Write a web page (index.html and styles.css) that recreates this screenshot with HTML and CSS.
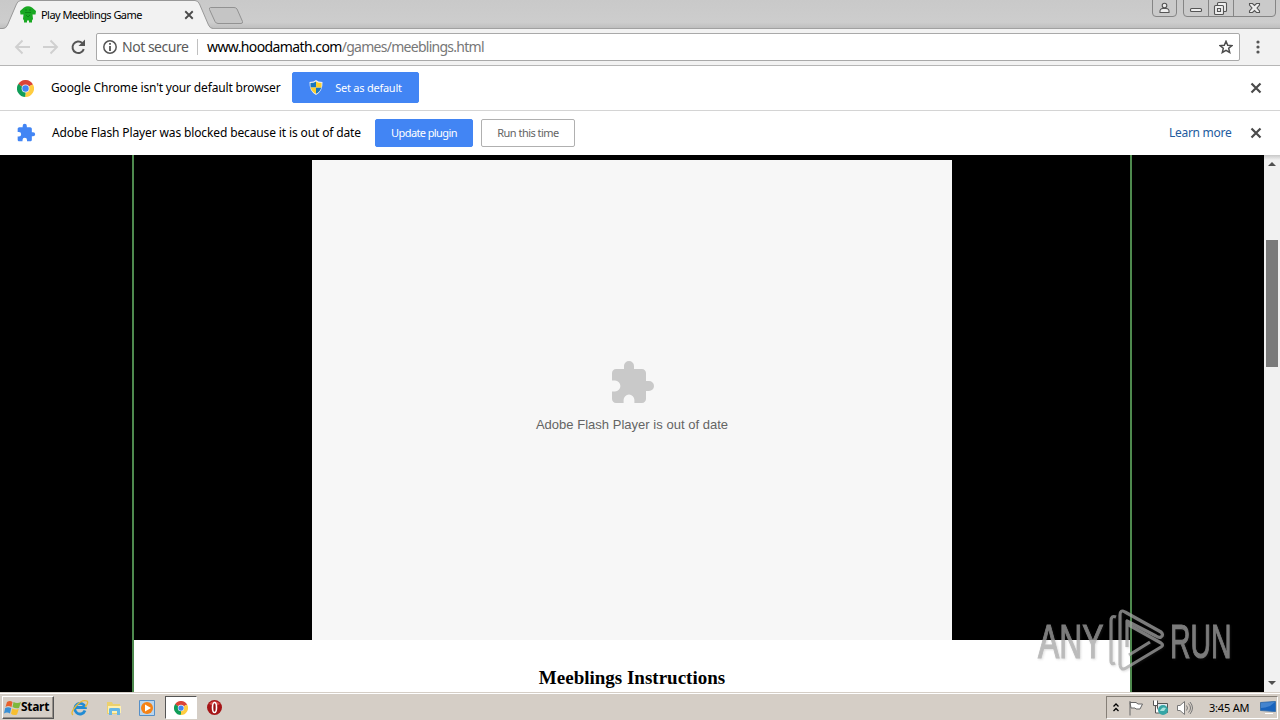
FILE: index.html
```html
<!DOCTYPE html>
<html lang="en">
<head>
<meta charset="utf-8">
<title>Play Meeblings Game</title>
<link rel="stylesheet" href="styles.css">
</head>
<body>
<svg width="0" height="0" class="defs">
  <symbol id="puzzle" viewBox="0 0 24 24"><path d="M20.500 11H19V7c0-1.100-.9-2-2-2h-4V3.500a2.500 2.500 0 0 0-5 0V5H4c-1.100 0-2 .9-2 2v3.800h1.500a2.700 2.700 0 0 1 0 5.400H2V20c0 1.100.9 2 2 2h3.800v-1.500a2.700 2.700 0 0 1 5.400 0V22H17c1.100 0 2-.9 2-2v-4h1.500a2.500 2.500 0 0 0 0-5z"/></symbol>
  <symbol id="chrome" viewBox="0 0 48 48">
    <path fill="#db4437" d="M24 24 3.200 12A24 24 0 0 1 44.800 12z"/>
    <path fill="#ffcd40" d="M24 24 44.800 12A24 24 0 0 1 24 48z"/>
    <path fill="#0f9d58" d="M24 24V48A24 24 0 0 1 3.200 12z"/>
    <path fill="#db4437" d="M24 13H45.300L44.800 12 24 10z"/>
    <path fill="#ffcd40" d="M33.500 29.500 24 48 22 47.800 31 28z"/>
    <path fill="#0f9d58" d="M14.500 29.500 3.200 12 4.500 10.500 17 26z"/>
    <circle cx="24" cy="24" r="11" fill="#f1f1f1"/><circle cx="24" cy="24" r="9" fill="#4285f4"/>
  </symbol>
  <symbol id="cross" viewBox="0 0 12 12"><path d="M1.500 1.500l9 9M10.500 1.500l-9 9" fill="none" stroke="#4b4b4b" stroke-width="2.200"/></symbol>
</svg>

<header class="tabstrip">
  <svg class="tabshape" width="250" height="29" viewBox="0 0 250 29">
    <path d="M0 28.500H3Q6 28.500 7.500 25L16.500 4Q18 .5 21 .5H195Q198 .5 199.500 4L208.500 25Q210 28.500 213 28.500V29H0z" fill="#f2f2f2"/>
    <path d="M0 28.500H3Q6 28.500 7.500 25L16.500 4Q18 .5 21 .5H195Q198 .5 199.500 4L208.500 25Q210 28.500 213 28.500" fill="none" stroke="#989898"/>
    <path d="M210.500 7.500H234Q236 7.500 237 9L242.500 21.500Q243 23.500 241 23.500H218Q216 23.500 215 21.500L209.500 9.500Q209 7.500 210.500 7.500z" fill="#c5c5c5" stroke="#929292"/>
  </svg>
  <div class="tab">
    <svg width="16" height="17" viewBox="0 0 16 17" fill="#19a822"><path d="M4 1.500Q8-1 12 1.500L16 5 15.500 8.500 12.500 8.500 13 13 12 14.500V16.500H9V14.500H7V16.500H4V14.500L3 13 3.500 8.500.5 8.500 0 5z"/><path d="M5 4h2M9 4h2M5 6.500h6M6 9l2 2 2-2" fill="none" stroke="#0a7c11" stroke-width=".8"/></svg>
    <span class="tabtitle">Play Meeblings Game</span>
    <svg width="10" height="10"><use href="#cross"/></svg>
  </div>
  <svg class="winbtns" width="128" height="18" viewBox="0 0 128 18" fill="none">
    <path d="M.5 0V13Q.5 16.500 4 16.500H21Q24.500 16.500 24.500 13V0M31.500 0V13Q31.500 16.500 35 16.500H120Q123.500 16.500 123.500 13V0M56.500 0V16M81.500 0V16" fill="#cacaca" stroke="#858585"/>
    <g stroke="#555" stroke-width="1.100" fill="#eee">
      <circle cx="12.500" cy="5.500" r="2.300"/><path d="M8 12.500Q7.500 8.500 11 8.500H14Q17.500 8.500 17 12.500z"/>
      <rect x="38.500" y="8.500" width="11" height="3" rx="1"/>
      <rect x="65.500" y="2.500" width="9" height="9" rx="1"/><rect x="62.500" y="5.500" width="9" height="9" rx="1"/><path d="M65.500 8.500h3v3h-3z"/>
      <path d="M97.500 3.500H100.500L102.500 5.500 104.500 3.500H107.500V5L105 8 107.500 11V12.500H104.500L102.500 10.500 100.500 12.500H97.500V11L100 8 97.500 5z"/>
    </g>
  </svg>
</header>

<div class="toolbar">
  <svg width="82" height="20" viewBox="0 0 82 20" fill="none">
    <path d="M16 10H2M8.500 3.500L2 10 8.500 16.500M29 10H43M36.500 3.500L43 10 36.500 16.500" stroke="#d0d0d0" stroke-width="1.900"/>
    <path d="M69.800 12.200A5.800 5.800 0 1 1 68.200 5.900" stroke="#555" stroke-width="2"/><path d="M71 2.500V9H64.500z" fill="#555"/>
  </svg>
  <div class="omnibox">
    <svg width="14" height="14" viewBox="0 0 14 14"><circle cx="7" cy="7" r="6.200" fill="none" stroke="#555" stroke-width="1.500"/><path d="M6.100 6h1.800v5H6.100zM6.100 3h1.800v1.800H6.100z" fill="#555"/></svg>
    <span class="secure">Not secure</span>
    <span class="sep"></span>
    <span class="url"><b>www.hoodamath.com</b><span class="path">/games/meeblings.html</span></span>
    <svg class="star" width="14" height="14" viewBox="0 0 14 14"><path d="M7 1.300 8.700 5.200 12.900 5.600 9.700 8.300 10.700 12.500 7 10.300 3.300 12.500 4.300 8.300 1.100 5.600 5.300 5.200z" fill="none" stroke="#4c4c4c" stroke-width="1.500"/></svg>
  </div>
  <svg class="kebab" width="4" height="14" viewBox="0 0 4 14" fill="#555"><circle cx="2" cy="2" r="1.600"/><circle cx="2" cy="7" r="1.600"/><circle cx="2" cy="12" r="1.600"/></svg>
</div>

<div class="infobar first">
  <svg width="17" height="17"><use href="#chrome"/></svg>
  <span class="msg default-msg">Google Chrome isn't your default browser</span>
  <button class="btn blue setdefault">
    <svg width="14" height="15" viewBox="0 0 14 15"><path d="M7 0Q9 2 13.500 2 14 11 7 15 0 11 .5 2 5 2 7 0z" fill="#eee"/><path d="M7 1.500V7.500H1.600Q1.400 5 1.500 3 5 3 7 1.500zM7 7.500H12.300Q11 12 7 13.800z" fill="#1976bd"/><path d="M7 1.500Q9 3 12.500 3 12.600 6 12.300 7.500H7zM1.600 7.500H7V13.800Q3 12 1.600 7.500z" fill="#fcd02d"/></svg>
    <span class="t-set">Set as default</span>
  </button>
  <svg class="close" width="12" height="12"><use href="#cross"/></svg>
</div>
<div class="infobar second">
  <svg width="20" height="20" fill="#4285f4" class="plug"><use href="#puzzle"/></svg>
  <span class="msg flash-msg">Adobe Flash Player was blocked because it is out of date</span>
  <button class="btn blue update"><span class="t-upd">Update plugin</span></button>
  <button class="btn run"><span class="t-run">Run this time</span></button>
  <a class="learn">Learn more</a>
  <svg class="close" width="12" height="12"><use href="#cross"/></svg>
</div>

<main class="viewport">
  <div class="page">
    <div class="column">
      <div class="plugin">
        <svg width="48" height="48" fill="#c9c9c9"><use href="#puzzle"/></svg>
        <span class="plugtext">Adobe Flash Player is out of date</span>
      </div>
      <div class="article"><h3>Meeblings Instructions</h3></div>
    </div>
  </div>
  <div class="scrollbar">
    <svg width="8" height="4" viewBox="0 0 8 4"><path d="M0 4 4 0 8 4z" fill="#505050"/></svg>
    <div class="thumb"></div>
    <svg class="down" width="8" height="4" viewBox="0 0 8 4"><path d="M0 0 4 4 8 0z" fill="#505050"/></svg>
  </div>
  <div class="watermark">
    <span class="any">ANY</span>
    <svg width="58" height="63" viewBox="0 0 58 63" fill="none" stroke="#a5a5a5" stroke-width="3.200" stroke-linejoin="round">
      <path d="M9 8Q4 6 4 12V52Q4 56 8 54M13 56V6Q13 0 18 3L54 23Q57 26 54 28 52 29 49 27L20 12V38"/><path d="M13 56Q14 62 19 59L54 38Q57 36 54 34L20 15M22 46 43 33"/>
    </svg>
    <span class="runword">RUN</span>
  </div>
</main>

<footer class="taskbar">
  <div class="start">
    <svg width="17" height="16" viewBox="0 0 17 16"><path d="M3 2Q6 0 8.500 2L7.500 7Q4 5 1.500 7z" fill="#e8602c"/><path d="M9.500 2Q13 4 17 2L15 8Q12 9 8.500 7z" fill="#7eb83b"/><path d="M1.200 8Q4 6.500 7.200 8L6 13.500Q3 11.500 0 13.500z" fill="#398fd5"/><path d="M8.200 8.500Q12 10 14.800 9L13 14.500Q9.500 16 7 13.800z" fill="#f8bf31"/></svg>
    <span class="t-start">Start</span>
  </div>
  <svg class="ie" width="18" height="18" viewBox="0 0 18 18" fill="none"><path d="M14 11.500A5.300 5.300 0 1 1 14.200 8.500H5" stroke="#218bd3" stroke-width="2.800"/><path d="M2 16Q-1 14 5 7T16 2Q18 4 14 8" stroke="#e9b934" stroke-width="1.300"/></svg>
  <svg class="folder" width="16" height="16" viewBox="0 0 16 16"><path d="M1 2h5l1 2h7v10H1z" fill="#ecd06d"/><path d="M2 6h13v7H2z" fill="#fff0af"/><path d="M3 15V9Q3 8 5 8h7q2 0 2 1v6h-3v-4H6v4z" fill="#67b7e6"/></svg>
  <svg class="media" width="16" height="16" viewBox="0 0 16 16"><path d="M.5.5h15v15H.5z" fill="#b9d5ee" stroke="#568fc7"/><circle cx="8" cy="8" r="6" fill="#f58216"/><path d="M6 4.500 12 8 6 11.500z" fill="#fff"/></svg>
  <div class="active"><svg width="14" height="14"><use href="#chrome"/></svg></div>
  <svg class="opera" width="15" height="15" viewBox="0 0 15 15"><circle cx="7.500" cy="7.500" r="7.500" fill="#a51517"/><path d="M2 4A7 7 0 0 1 13 4Q8 7 2 4z" fill="#d84c48"/><ellipse cx="7.500" cy="7.500" rx="2" ry="5" fill="#911" stroke="#fff" stroke-width="1.600"/></svg>
  <div class="tray">
    <svg width="6" height="9" viewBox="0 0 6 9" fill="none" stroke="#000" stroke-width="1.300"><path d="M.5 3.500 3 1 5.500 3.500M.5 8 3 5.500 5.500 8"/></svg>
    <svg class="flag" width="16" height="16" viewBox="0 0 16 16"><path d="M2 1V15.500M2 2.500H8L10 4H14.500L12 9H8L7 8H3z" fill="#fff" stroke="#666"/></svg>
    <svg class="net" width="17" height="16" viewBox="0 0 17 16"><path d="M5.500 3.500h10v9h-10z" fill="#dce9ee" stroke="#565656"/><path d="M1.500.500v5h4v-5M3.500 5v8h4" fill="#fff" stroke="#555"/><circle cx="11" cy="10" r="5" fill="#35a5a5"/><path d="M8 11q2-5 6-3l-2 3z" fill="#a6e2dc"/></svg>
    <svg class="sound" width="16" height="14" viewBox="0 0 16 14" fill="none" stroke="#777"><path d="M.5 4.500H3L7.500.500V13.500L3 9.500H.5z" fill="#fff"/><path d="M9.500 4.500q2 2.500 0 5M11.500 2.500q4 4.500 0 9M13 1q5 6 0 12"/></svg>
    <span class="clock">3:45 AM</span>
    <svg class="desk" width="16" height="13" viewBox="0 0 16 13"><path d="M.5 1.500 15.500.5V10.500L.5 9.500z" fill="#1863bd" stroke="#3b71aa"/><path d="M1 2 15 1 10 5Q5 7 1 7z" fill="#4384cf"/><path d="M5 12.500h8" stroke="#fff"/></svg>
  </div>
</footer>
</body>
</html>
```
FILE: styles.css
```css
* { box-sizing: border-box; }
body { margin: 0; width: 1280px; height: 720px; overflow: hidden; display: flex; flex-direction: column; font-family: "Noto Sans", sans-serif; font-size: 12px; color: #000; background: #fff; }
svg { display: block; flex: none; }
.defs { position: absolute; }
span, a { white-space: nowrap; flex: none; }
.tabstrip { height: 29px; position: relative; display: flex; justify-content: space-between; background: linear-gradient(#c9c9c9, #cdcdcd 80%, #bfbfbf); border-bottom: 1px solid #a1a1a1; }
.tabshape { position: absolute; left: 0; top: 0; }
.tab { position: relative; display: flex; align-items: center; height: 29px; padding-left: 20px; }
.tabtitle { margin-left: 5px; width: 143px; padding-bottom: 1px; font-size: 11px; letter-spacing: -.55px; }
.toolbar { height: 37px; display: flex; align-items: center; padding-left: 14px; background: #f2f2f2; border-bottom: 1px solid #b6b6b6; }
.omnibox { width: 1144px; height: 28px; display: flex; align-items: center; padding-left: 6px; border: 1px solid #a9a9a9; border-radius: 2px; background: #fff; }
.secure { margin-left: 5px; width: 74px; padding-bottom: 1px; font-size: 14px; color: #5a5a5a; letter-spacing: -.48px; }
.sep { width: 1px; height: 16px; background: #c0c0c0; margin-left: 1px; }
.url { margin-left: 9px; padding-bottom: 1px; font-size: 14px; letter-spacing: -.6px; }
.url b { font-weight: 400; }
.path { color: #777; letter-spacing: -.73px; }
.star { margin-left: auto; margin-right: 6px; }
.kebab { margin-left: 16px; }
.infobar { display: flex; align-items: center; background: #fff; padding-left: 17px; }
.first { height: 45px; border-bottom: 1px solid #d4d4d4; }
.second { height: 44px; }
.plug { margin-left: -1px; }
.msg { font-size: 12px; padding-bottom: 2px; }
.default-msg { margin-left: 17px; width: 241px; letter-spacing: -.16px; }
.flash-msg { margin-left: 16px; width: 323px; letter-spacing: -.13px; }
.btn { display: flex; align-items: center; justify-content: center; height: 28px; padding: 0; font: 11px "Noto Sans", sans-serif; border: 1px solid #b0b0b0; border-radius: 2px; background: #fff; color: #646464; }
.btn span { padding-bottom: 1px; }
.btn.blue { background: #4285f4; border-color: #4285f4; color: #fff; }
.setdefault { width: 127px; height: 31px; margin-top: -1px; gap: 12px; }
.t-set { letter-spacing: -.25px; }
.t-upd { letter-spacing: -.6px; }
.t-run { letter-spacing: -.53px; }
.update { width: 98px; }
.run { width: 94px; margin-left: 8px; }
.close { margin-left: auto; margin-right: 18px; }
.learn { margin-left: auto; color: #235b9e; font-size: 12px; width: 63px; letter-spacing: -.28px; padding-bottom: 2px; }
.learn + .close { margin-left: 18px; }
.viewport { height: 537px; position: relative; display: flex; background: #000; overflow: hidden; }
.page { width: 1264px; display: flex; justify-content: center; }
.column { width: 1000px; border: solid #4e8a4e; border-width: 0 2px; padding-top: 5px; display: flex; flex-direction: column; align-items: center; }
.plugin { width: 640px; height: 480px; background: #f7f7f7; display: flex; flex-direction: column; align-items: center; padding-top: 199px; }
.plugtext { font: 13px/16px "Liberation Sans", sans-serif; letter-spacing: .02px; color: #646464; margin-top: 10px; }
.article { align-self: stretch; height: 52px; background: #fff; text-align: center; }
h3 { margin: 27px 0 0; font: bold 19px/22px "Liberation Serif", serif; }
.scrollbar { width: 16px; background: linear-gradient(#c8c8c8, #f1f1f1 5px); display: flex; flex-direction: column; align-items: center; padding-top: 7px; }
.thumb { width: 12px; height: 127px; margin-top: 74px; background: #7b7b7b; }
.down { margin-top: auto; margin-bottom: 7px; }
.watermark { position: absolute; left: 1038px; top: 454px; display: flex; align-items: center; color: #a5a5a5; font: 49px/62px "Liberation Sans", sans-serif; opacity: .75; filter: drop-shadow(1px 1px 1px rgba(80,80,80,.25)); }
.any, .runword { transform-origin: 0 50%; -webkit-text-stroke: 1.2px #a5a5a5; }
.any { width: 69px; transform: scaleX(.65); }
.runword { width: 65px; transform: scaleX(.58); margin-left: 5px; }
.taskbar { height: 28px; display: flex; align-items: center; padding: 2px 0 0 2px; background: #d5cec6; border-top: 1px solid #d5cec6; box-shadow: inset 0 1px #fff; }
.start { width: 52px; height: 23px; display: flex; align-items: center; padding-left: 1px; border: 1px solid; border-color: #fff #555 #555 #fff; box-shadow: inset -1px -1px #969089; }
.t-start { font-weight: 700; font-size: 12px; letter-spacing: -.3px; padding-bottom: 2px; }
.ie { margin-left: 17px; }
.folder { margin-left: 17px; }
.media { margin-left: 17px; }
.active { width: 32px; height: 23px; margin-left: 10px; display: flex; align-items: center; justify-content: center; background: #fff; border: 1px solid; border-color: #555 #fff #fff #555; }
.opera { margin-left: 10px; }
.tray { margin-left: auto; margin-right: 2px; width: 172px; height: 23px; display: flex; align-items: center; padding-left: 6px; border: 1px solid; border-color: #857f77 #fff #fff #857f77; }
.flag { margin-left: 9px; }
.net { margin-left: 8px; }
.sound { margin-left: 8px; }
.clock { margin-left: 16px; width: 41px; font-size: 11px; letter-spacing: -.2px; padding-bottom: 1px; }
.desk { margin-left: 10px; }
```
